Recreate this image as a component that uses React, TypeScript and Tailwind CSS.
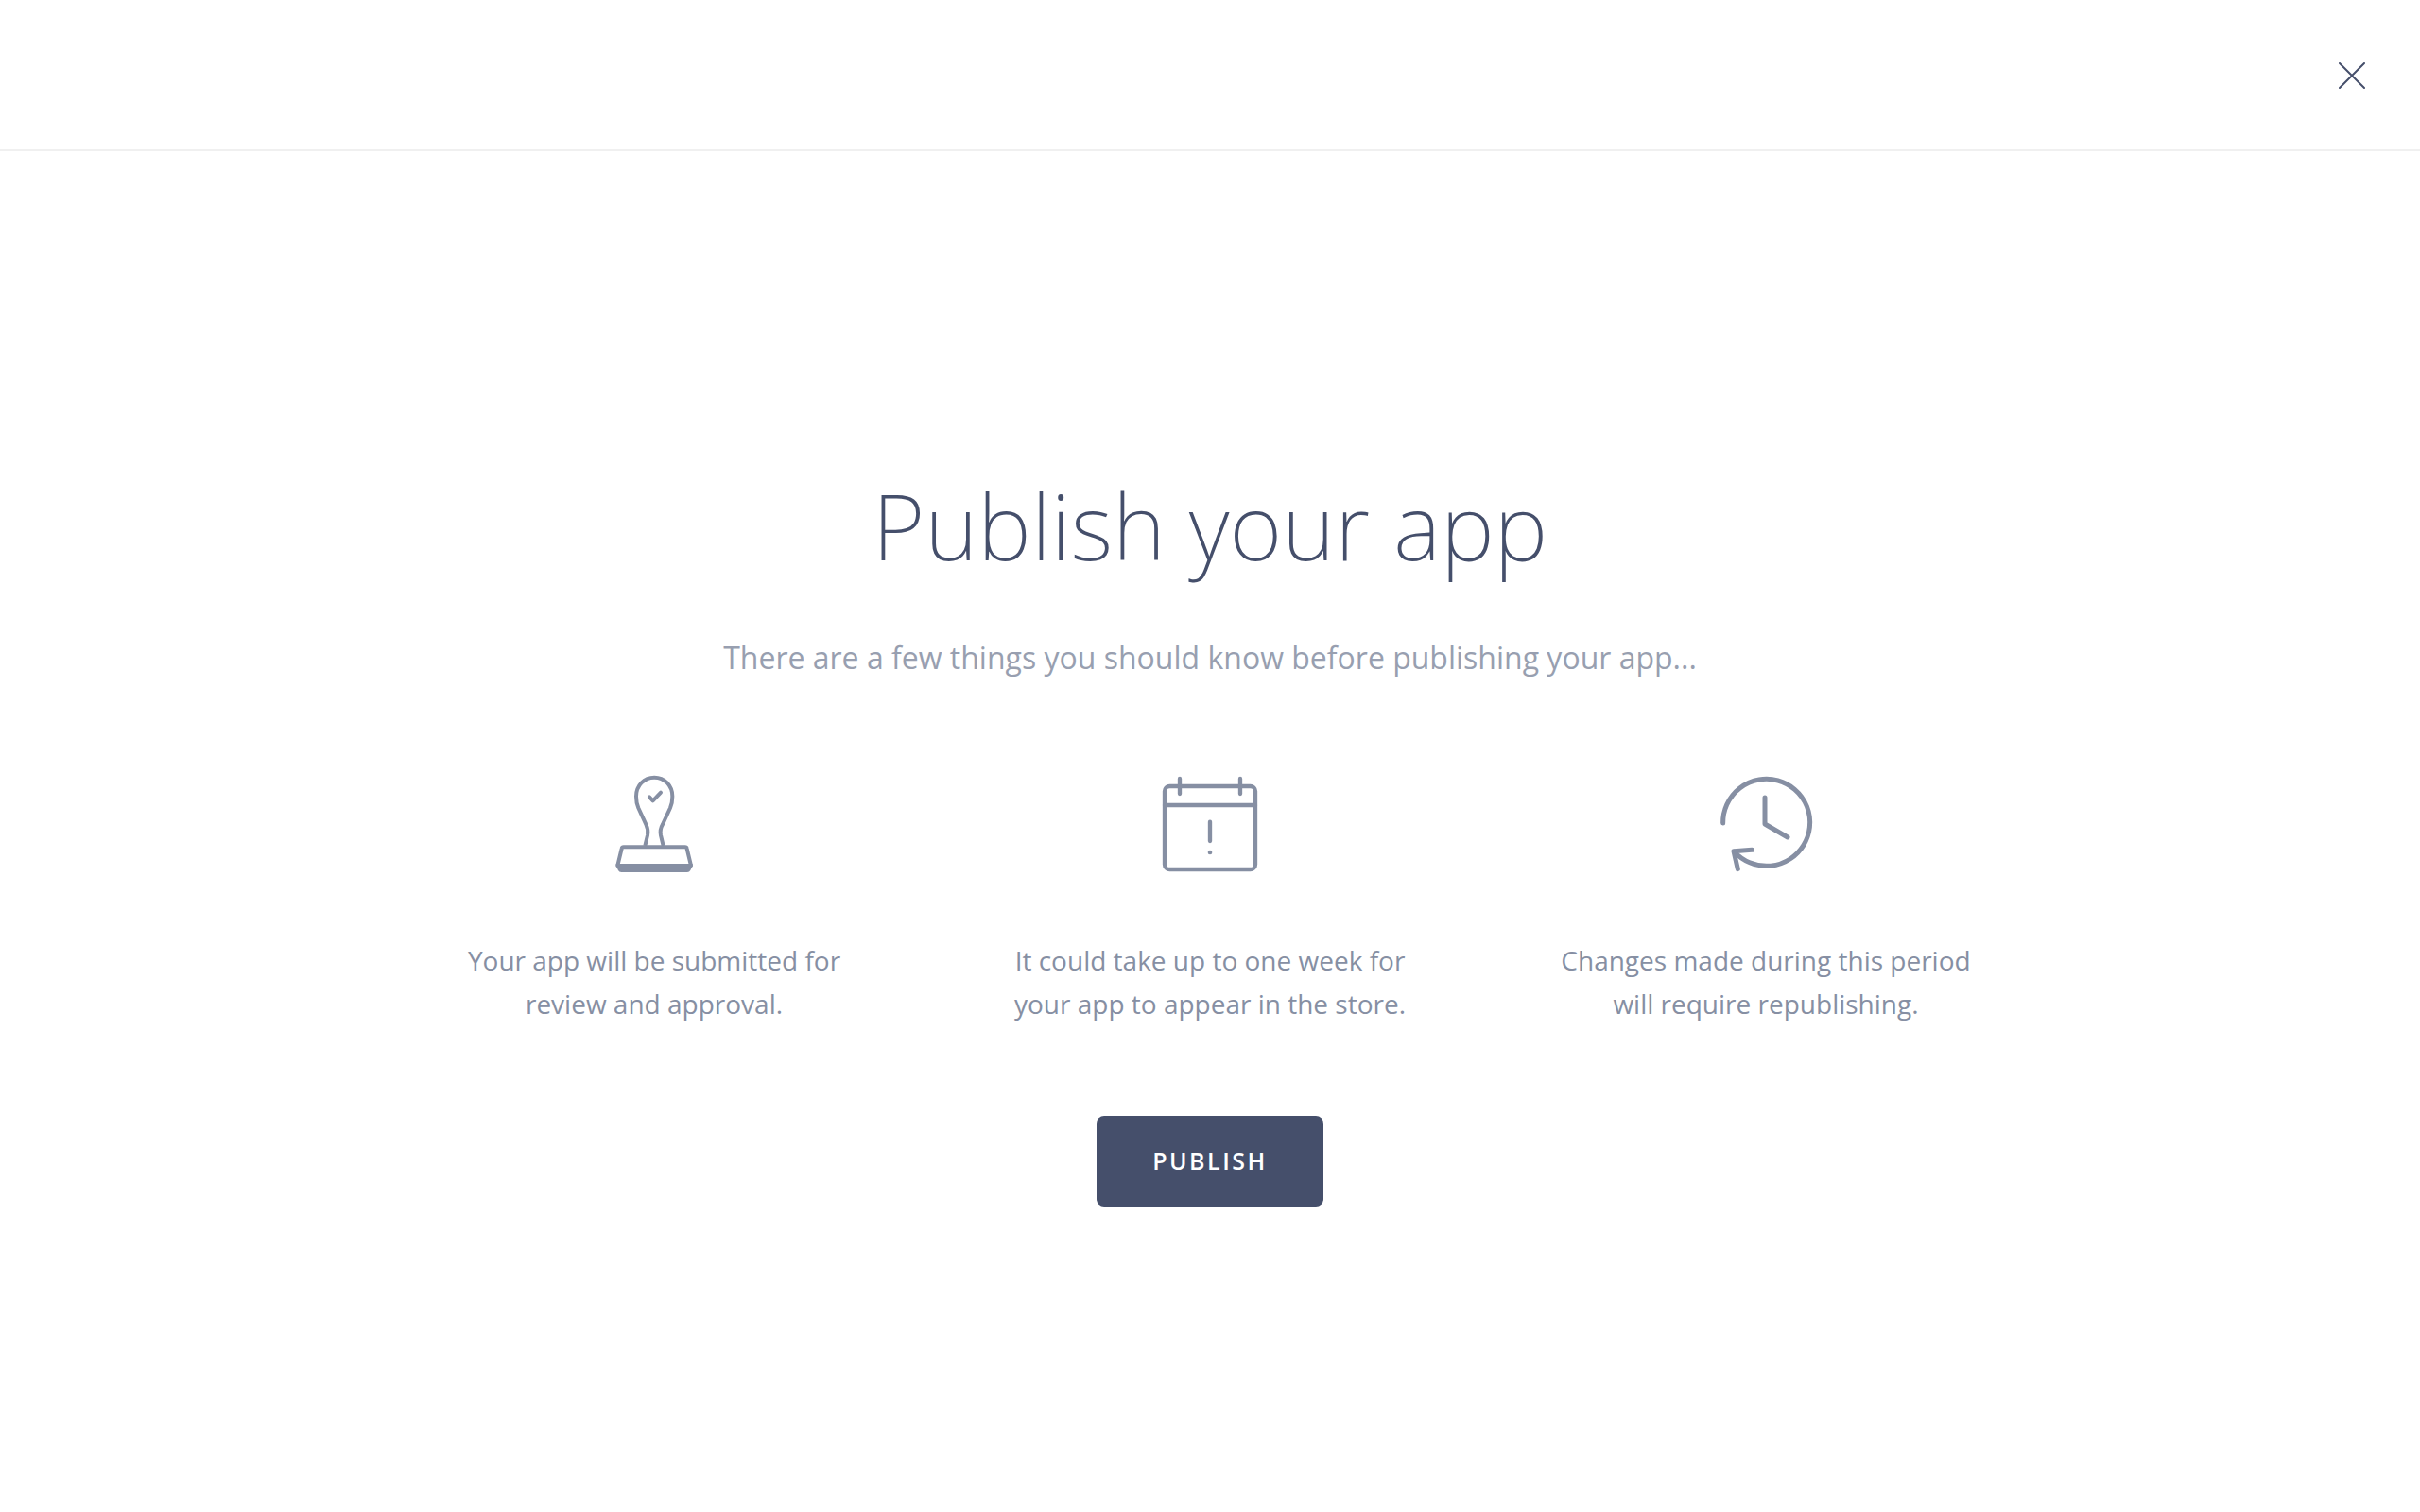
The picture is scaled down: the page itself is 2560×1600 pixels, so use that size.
import type { ReactNode } from "react";

function StampIcon() {
  return (
    <svg
      viewBox="-25 0 360 375"
      className="h-[125px] w-[120px]"
      fill="none"
      stroke="currentColor"
      strokeWidth="12"
      strokeLinecap="round"
      strokeLinejoin="round"
      aria-hidden="true"
    >
      <path
        d="M126 255L134 222C137 208 135 199 129 187L105 135C100 123 98 112 98 98C98 64 123 38 155.500 38C188 38 213 64 213 98C213 112 211 123 206 135L182 187C175 199 173 208 176 222L184 255"
        strokeLinecap="butt"
      />
      <path d="M140 100L151 112L176 86" />
      <path d="M39 318L52 264Q53 259 58 259H253Q258 259 259 264L272 318" />
      <path
        d="M34 312H277V318L270 333Q267 339 260 339H51Q44 339 41 333L34 318Z"
        fill="currentColor"
        stroke="none"
      />
    </svg>
  );
}

function CalendarIcon() {
  return (
    <svg
      viewBox="0 0 360 375"
      className="h-[125px] w-[120px]"
      fill="none"
      stroke="currentColor"
      strokeWidth="13"
      strokeLinecap="round"
      aria-hidden="true"
    >
      <rect x="36" y="66" width="288" height="264" rx="16" />
      <path d="M36 126H324" />
      <path d="M84 42V90M276 42V90" />
      <path d="M180 179V240" />
      <circle cx="180" cy="276" r="7" fill="currentColor" stroke="none" />
    </svg>
  );
}

function HistoryIcon() {
  return (
    <svg
      viewBox="-6 0 360 375"
      className="h-[125px] w-[120px]"
      fill="none"
      stroke="currentColor"
      strokeWidth="15"
      strokeLinecap="round"
      strokeLinejoin="round"
      aria-hidden="true"
    >
      <path d="M38 183A138 138 0 1 1 74 274" />
      <path d="M171 102V186L243 228" />
      <path d="M130 268L72 272L85 329" />
    </svg>
  );
}

function Note({ icon, children }: { icon: ReactNode; children: ReactNode }) {
  return (
    <li className="flex flex-col items-center gap-[58px] text-[#868fa3]">
      {icon}
      <p className="max-w-[440px] text-[28px] leading-[46px]">{children}</p>
    </li>
  );
}

export default function App() {
  return (
    <div className="flex min-h-screen flex-col bg-white font-['Open_Sans',sans-serif]">
      <header className="flex h-40 items-center justify-end border-b-2 border-[#f0f0f0] pt-0.5 pr-14">
        <button type="button" aria-label="Close" className="p-0.5 text-[#454f6b]">
          <svg
            viewBox="0 0 28 28"
            className="size-7"
            fill="none"
            stroke="currentColor"
            strokeWidth="2"
            strokeLinecap="round"
            aria-hidden="true"
          >
            <path d="M1 1L27 27M27 1L1 27" />
          </svg>
        </button>
      </header>

      <main className="flex flex-1 flex-col items-center justify-center text-center">
        <h1 className="font-['Noto_Sans',sans-serif] text-[96px] leading-[144px] font-extralight text-[#454f6b]">
          Publish your app
        </h1>
        <p className="mt-11 text-[32px] leading-[48px] text-[#989fb0]">
          There are a few things you should know before publishing your app...
        </p>
        <ul className="mt-[90px] grid w-full max-w-[1764px] grid-cols-3">
          <Note icon={<StampIcon />}>Your app will be submitted for review and approval.</Note>
          <Note icon={<CalendarIcon />}>It could take up to one week for your app to appear in the store.</Note>
          <Note icon={<HistoryIcon />}>Changes made during this period will require republishing.</Note>
        </ul>
        <button
          type="button"
          className="mt-24 h-24 w-60 rounded-lg bg-[#454f6b] text-[25px] font-semibold tracking-widest text-white"
        >
          PUBLISH
        </button>
      </main>
    </div>
  );
}
